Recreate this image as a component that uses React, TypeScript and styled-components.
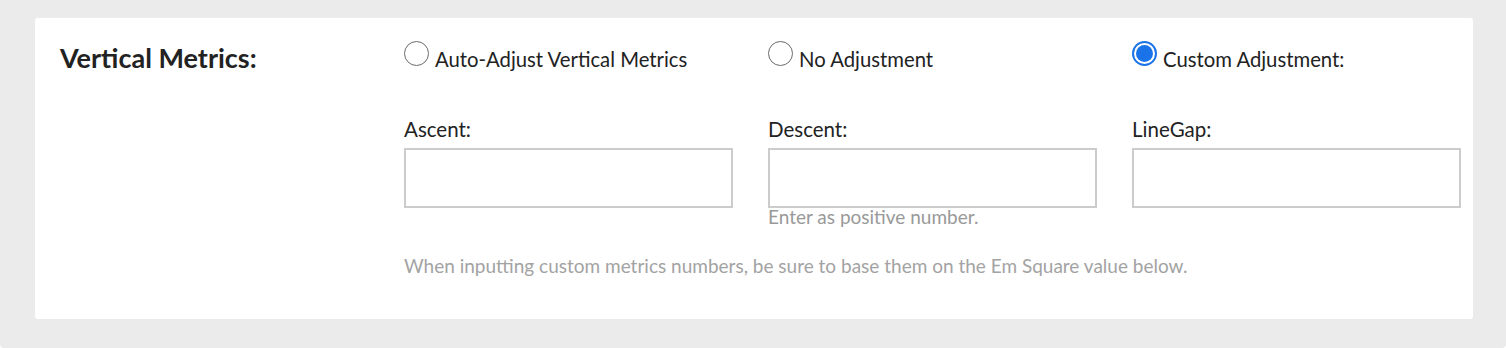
import styled, { createGlobalStyle } from 'styled-components';

const GlobalStyle = createGlobalStyle`
  html, body {
    margin: 0;
    padding: 0;
    background: #ffffff;
  }
  body {
    font-family: Lato, "Noto Sans", sans-serif;
    color: #222222;
  }
`;

const Page = styled.div`
  background: #ebebeb;
  padding: 18px 33px 28px 35px;
  height: 348px;
  box-sizing: border-box;
  border-radius: 0 0 4px 4px;
`;

const Card = styled.section`
  background: #ffffff;
  border-radius: 3px;
  height: 301px;
  box-sizing: border-box;
  padding: 22px 0 0 25px;
  display: grid;
  grid-template-columns: 344px 1fr;
`;

const Title = styled.h2`
  margin: 0;
  font-size: 27px;
  line-height: 36px;
  font-weight: 700;
  color: #222222;
`;

const Body = styled.div`
  padding-top: 1px;
`;

const Columns = styled.div`
  display: grid;
  grid-template-columns: repeat(3, 329px);
  column-gap: 35px;
`;

const RadioLabel = styled.label`
  display: flex;
  align-items: flex-start;
  gap: 6px;
  font-size: 20.3px;
  line-height: 36px;
  color: #222222;
  cursor: pointer;
`;

const RadioMark = styled.span<{ $checked?: boolean }>`
  flex: none;
  width: 25px;
  height: 25px;
  box-sizing: border-box;
  border-radius: 50%;
  border: ${(p) => (p.$checked ? '2px solid #1a73e8' : '1.5px solid #6b6b6b')};
  background: #ffffff;
  display: flex;
  align-items: center;
  justify-content: center;
  margin-top: 0;
  &::after {
    content: '';
    display: ${(p) => (p.$checked ? 'block' : 'none')};
    width: 17px;
    height: 17px;
    border-radius: 50%;
    background: #1a73e8;
  }
`;

const Field = styled.div`
  display: flex;
  flex-direction: column;
  margin-top: 38px;
`;

const FieldLabel = styled.label`
  font-size: 20.5px;
  line-height: 28px;
  color: #222222;
  margin-bottom: 5px;
`;

const Input = styled.input`
  width: 329px;
  height: 60px;
  box-sizing: border-box;
  border: 2px solid #cccccc;
  border-radius: 0;
  font-size: 18px;
  font-family: inherit;
  padding: 0 12px;
  outline: none;
`;

const Hint = styled.div`
  font-size: 19px;
  line-height: 22px;
  color: #999999;
  margin-top: -2px;
`;

const Note = styled.p`
  margin: 27px 0 0;
  font-size: 19px;
  line-height: 22px;
  color: #a3a3a3;
`;

const fields = [
  { label: 'Ascent:', hint: '' },
  { label: 'Descent:', hint: 'Enter as positive number.' },
  { label: 'LineGap:', hint: '' },
];

const options = [
  { label: 'Auto-Adjust Vertical Metrics', checked: false },
  { label: 'No Adjustment', checked: false },
  { label: 'Custom Adjustment:', checked: true },
];

export default function App() {
  return (
    <>
      <GlobalStyle />
      <Page>
        <Card>
          <Title>Vertical Metrics:</Title>
          <Body>
            <Columns>
              {options.map((opt) => (
                <RadioLabel key={opt.label}>
                  <RadioMark $checked={opt.checked} />
                  {opt.label}
                </RadioLabel>
              ))}
            </Columns>
            <Columns>
              {fields.map((f) => (
                <Field key={f.label}>
                  <FieldLabel>{f.label}</FieldLabel>
                  <Input type="text" />
                  <Hint>{f.hint || '\u00a0'}</Hint>
                </Field>
              ))}
            </Columns>
            <Note>
              When inputting custom metrics numbers, be sure to base them on the Em Square value
              below.
            </Note>
          </Body>
        </Card>
      </Page>
    </>
  );
}
